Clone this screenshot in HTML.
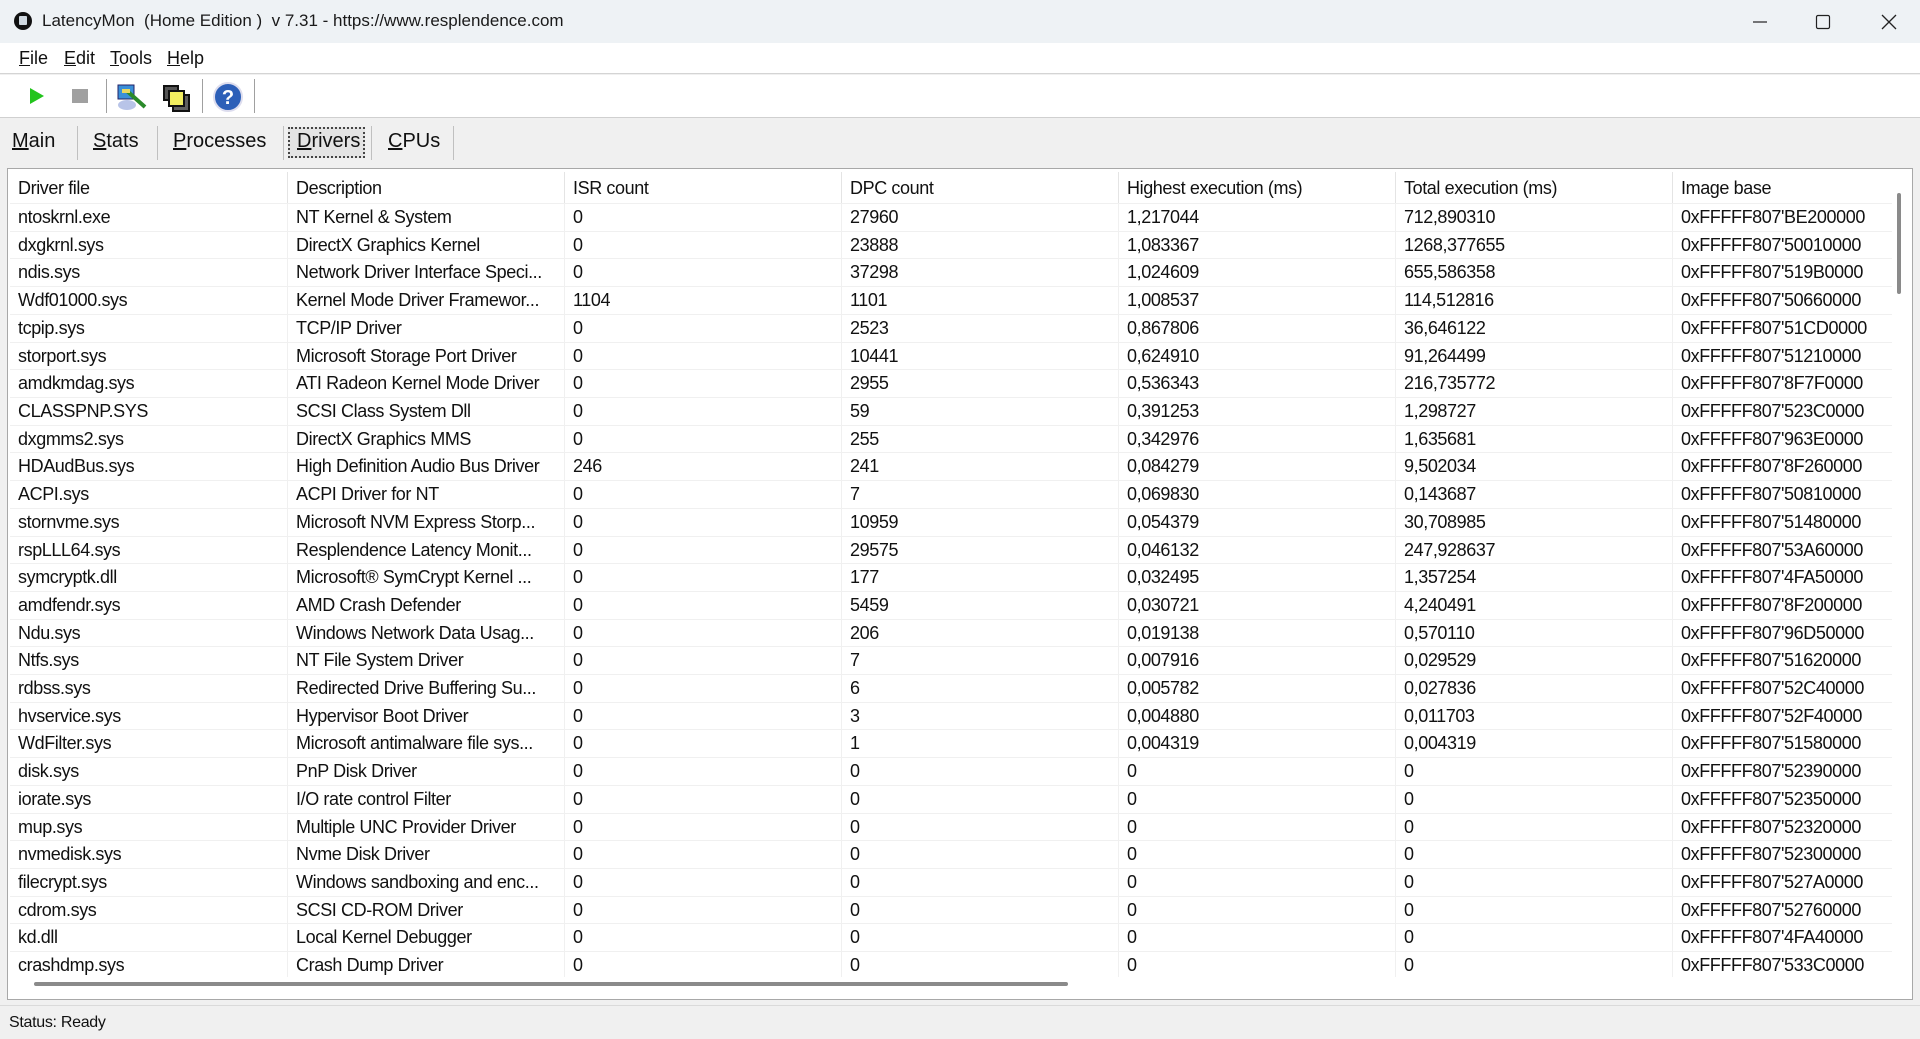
<!DOCTYPE html>
<html><head><meta charset="utf-8"><style>
*{margin:0;padding:0;box-sizing:border-box}
body{width:1920px;height:1039px;overflow:hidden;background:#f0f0f0;font-family:"Liberation Sans",Arial,sans-serif;color:#111;position:relative}
.abs{position:absolute}
#title{left:0;top:0;width:1920px;height:43px;background:#eef2f5}
#title .t{left:42px;top:11px;font-size:17px;color:#1a1a1a;white-space:nowrap}
#menu{left:0;top:43px;width:1920px;height:31px;background:#fff;border-bottom:1px solid #d4d4d4}
#menu span{position:absolute;top:5px;font-size:18px}
#tb{left:0;top:75px;width:1920px;height:43px;background:#fff;border-bottom:1px solid #d0d0d0}
.sep{position:absolute;width:1px;background:#a0a0a0}
#tabs span{position:absolute;top:130px;font-size:20px;color:#111}
u{text-decoration:underline}
#panel{left:7px;top:168px;width:1906px;height:832px;background:#fff;border:1px solid #a8a8a8}
.row{position:absolute;left:10px;width:1882px;height:27.71px;border-bottom:1px solid #f0f0f0;font-size:18px;line-height:27px;white-space:nowrap}
.row div{position:absolute;top:0;height:100%;padding-left:8px;overflow:hidden;border-left:1px solid #f0f0f0;letter-spacing:-0.4px}
.hdr{top:172px;height:32px;line-height:32px}
.hdr div{border-left:1px solid #e4e4e4}
#status{left:0;top:1005px;width:1920px;height:34px;border-top:1px solid #dadada;background:#f0f0f0}
</style></head><body>
<div id="title" class="abs">
 <svg class="abs" style="left:13px;top:11px" width="20" height="20"><circle cx="10" cy="10" r="9" fill="#111"/><rect x="6" y="5" width="8" height="9" rx="1" fill="#cfd8e0"/></svg>
 <div class="abs t">LatencyMon&nbsp; (Home Edition )&nbsp; v 7.31 - https://www.resplendence.com</div>
 <svg class="abs" style="left:1752px;top:14px" width="16" height="16"><line x1="1" y1="8" x2="15" y2="8" stroke="#222" stroke-width="1.2"/></svg>
 <svg class="abs" style="left:1815px;top:14px" width="16" height="16"><rect x="1.5" y="1.5" width="13" height="13" rx="1.5" fill="none" stroke="#222" stroke-width="1.2"/></svg>
 <svg class="abs" style="left:1881px;top:14px" width="16" height="16"><path d="M1 1L15 15M15 1L1 15" stroke="#222" stroke-width="1.3"/></svg>
</div>
<div id="menu" class="abs">
 <span style="left:19px"><u>F</u>ile</span><span style="left:64px"><u>E</u>dit</span><span style="left:110px"><u>T</u>ools</span><span style="left:167px"><u>H</u>elp</span>
</div>
<div id="tb" class="abs">
 <svg class="abs" style="left:28px;top:12px" width="18" height="18"><path d="M2 1L16 9L2 17Z" fill="#22c41c"/></svg>
 <div class="abs" style="left:72px;top:14px;width:16px;height:14px;background:#a0a0a0"></div>
 <div class="sep" style="left:106px;top:4px;height:34px"></div>
 <svg class="abs" style="left:115px;top:8px" width="34" height="30"><rect x="3" y="2" width="16" height="14" fill="#3a8fd8" stroke="#226" stroke-width="1"/><ellipse cx="12" cy="22" rx="9" ry="5" fill="#b8c4e8"/><path d="M12 8L30 24" stroke="#2a8a2a" stroke-width="4"/><rect x="7" y="6" width="8" height="4" fill="#e8d860"/></svg>
 <svg class="abs" style="left:161px;top:8px" width="32" height="32"><rect x="12" y="12" width="16" height="16" fill="#606060" stroke="#111" stroke-width="2"/><rect x="3" y="3" width="14" height="14" fill="#555" stroke="#111" stroke-width="2"/><rect x="8" y="8" width="15" height="15" fill="#f2ee60" stroke="#111" stroke-width="2"/></svg>
 <div class="sep" style="left:202px;top:4px;height:34px"></div>
 <svg class="abs" style="left:212px;top:6px" width="32" height="32"><circle cx="16" cy="16" r="14" fill="#2c5fb8" stroke="#dde" stroke-width="2"/><text x="16" y="23" font-size="20" font-weight="bold" fill="#fff" text-anchor="middle" font-family="Liberation Sans">?</text></svg>
 <div class="sep" style="left:254px;top:4px;height:34px"></div>
</div>
<div id="tabs">
 <span style="left:12px"><u>M</u>ain</span>
 <div class="sep" style="left:77px;top:126px;height:34px;background:#c0c0c0"></div>
 <span style="left:93px"><u>S</u>tats</span>
 <div class="sep" style="left:157px;top:126px;height:34px;background:#c0c0c0"></div>
 <span style="left:173px"><u>P</u>rocesses</span>
 <div class="sep" style="left:283px;top:126px;height:34px;background:#c0c0c0"></div>
 <div class="abs" style="left:288px;top:127px;width:77px;height:31px;border:2px dotted #444;background:#e4e4e4"></div>
 <span style="left:297px"><u>D</u>rivers</span>
 <div class="sep" style="left:371px;top:126px;height:34px;background:#c0c0c0"></div>
 <span style="left:388px"><u>C</u>PUs</span>
 <div class="sep" style="left:453px;top:126px;height:34px;background:#c0c0c0"></div>
</div>
<div id="panel" class="abs"></div>
<div class="row hdr"><div style="left:0;width:277px;border-left:none">Driver file</div><div style="left:277px;width:277px">Description</div><div style="left:554px;width:277px">ISR count</div><div style="left:831px;width:277px">DPC count</div><div style="left:1108px;width:277px">Highest execution (ms)</div><div style="left:1385px;width:277px">Total execution (ms)</div><div style="left:1662px;width:220px">Image base</div></div>
<div id="rows"></div>
<div class="abs" style="left:8px;top:977px;width:1904px;height:22px;background:#fff"></div>
<div class="abs" style="left:34px;top:982px;width:1034px;height:4px;background:#8a8a8a;border-radius:2px"></div>
<div class="abs" style="left:1897px;top:193px;width:4px;height:101px;background:#8a8a8a;border-radius:2px"></div>
<div id="status" class="abs"><div class="abs" style="left:9px;top:8px;font-size:16px;letter-spacing:-0.3px">Status: Ready</div></div>
<script>
var d=[
["ntoskrnl.exe","NT Kernel & System","0","27960","1,217044","712,890310","0xFFFFF807'BE200000"],
["dxgkrnl.sys","DirectX Graphics Kernel","0","23888","1,083367","1268,377655","0xFFFFF807'50010000"],
["ndis.sys","Network Driver Interface Speci...","0","37298","1,024609","655,586358","0xFFFFF807'519B0000"],
["Wdf01000.sys","Kernel Mode Driver Framewor...","1104","1101","1,008537","114,512816","0xFFFFF807'50660000"],
["tcpip.sys","TCP/IP Driver","0","2523","0,867806","36,646122","0xFFFFF807'51CD0000"],
["storport.sys","Microsoft Storage Port Driver","0","10441","0,624910","91,264499","0xFFFFF807'51210000"],
["amdkmdag.sys","ATI Radeon Kernel Mode Driver","0","2955","0,536343","216,735772","0xFFFFF807'8F7F0000"],
["CLASSPNP.SYS","SCSI Class System Dll","0","59","0,391253","1,298727","0xFFFFF807'523C0000"],
["dxgmms2.sys","DirectX Graphics MMS","0","255","0,342976","1,635681","0xFFFFF807'963E0000"],
["HDAudBus.sys","High Definition Audio Bus Driver","246","241","0,084279","9,502034","0xFFFFF807'8F260000"],
["ACPI.sys","ACPI Driver for NT","0","7","0,069830","0,143687","0xFFFFF807'50810000"],
["stornvme.sys","Microsoft NVM Express Storp...","0","10959","0,054379","30,708985","0xFFFFF807'51480000"],
["rspLLL64.sys","Resplendence Latency Monit...","0","29575","0,046132","247,928637","0xFFFFF807'53A60000"],
["symcryptk.dll","Microsoft® SymCrypt Kernel ...","0","177","0,032495","1,357254","0xFFFFF807'4FA50000"],
["amdfendr.sys","AMD Crash Defender","0","5459","0,030721","4,240491","0xFFFFF807'8F200000"],
["Ndu.sys","Windows Network Data Usag...","0","206","0,019138","0,570110","0xFFFFF807'96D50000"],
["Ntfs.sys","NT File System Driver","0","7","0,007916","0,029529","0xFFFFF807'51620000"],
["rdbss.sys","Redirected Drive Buffering Su...","0","6","0,005782","0,027836","0xFFFFF807'52C40000"],
["hvservice.sys","Hypervisor Boot Driver","0","3","0,004880","0,011703","0xFFFFF807'52F40000"],
["WdFilter.sys","Microsoft antimalware file sys...","0","1","0,004319","0,004319","0xFFFFF807'51580000"],
["disk.sys","PnP Disk Driver","0","0","0","0","0xFFFFF807'52390000"],
["iorate.sys","I/O rate control Filter","0","0","0","0","0xFFFFF807'52350000"],
["mup.sys","Multiple UNC Provider Driver","0","0","0","0","0xFFFFF807'52320000"],
["nvmedisk.sys","Nvme Disk Driver","0","0","0","0","0xFFFFF807'52300000"],
["filecrypt.sys","Windows sandboxing and enc...","0","0","0","0","0xFFFFF807'527A0000"],
["cdrom.sys","SCSI CD-ROM Driver","0","0","0","0","0xFFFFF807'52760000"],
["kd.dll","Local Kernel Debugger","0","0","0","0","0xFFFFF807'4FA40000"],
["crashdmp.sys","Crash Dump Driver","0","0","0","0","0xFFFFF807'533C0000"]];
var h="",L=[0,277,554,831,1108,1385,1662],W=[277,277,277,277,277,277,220];
d.forEach(function(r,i){h+='<div class="row" style="top:'+(204+i*27.71)+'px">';r.forEach(function(c,j){h+='<div style="left:'+L[j]+'px;width:'+W[j]+'px'+(j?'':';border-left:none')+'">'+c.replace(/&/g,'&amp;')+'</div>'});h+='</div>'});
document.getElementById('rows').innerHTML=h;
</script>
</body></html>
